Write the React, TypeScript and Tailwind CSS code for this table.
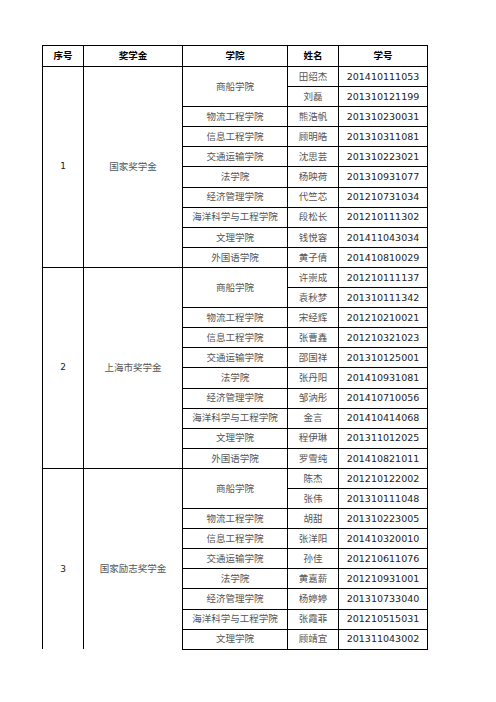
const groups = [
  {
    no: '1',
    award: '国家奖学金',
    open: false,
    rows: [
      { college: '商船学院', span: 2, name: '田绍杰', id: '201410111053' },
      { college: null, span: 0, name: '刘磊', id: '201310121199' },
      { college: '物流工程学院', span: 1, name: '熊浩帆', id: '201310230031' },
      { college: '信息工程学院', span: 1, name: '顾明皓', id: '201310311081' },
      { college: '交通运输学院', span: 1, name: '沈思芸', id: '201310223021' },
      { college: '法学院', span: 1, name: '杨映荷', id: '201310931077' },
      { college: '经济管理学院', span: 1, name: '代竺芯', id: '201210731034' },
      { college: '海洋科学与工程学院', span: 1, name: '段松长', id: '201210111302' },
      { college: '文理学院', span: 1, name: '钱悦容', id: '201411043034' },
      { college: '外国语学院', span: 1, name: '黄子倩', id: '201410810029' },
    ],
  },
  {
    no: '2',
    award: '上海市奖学金',
    open: false,
    rows: [
      { college: '商船学院', span: 2, name: '许崇成', id: '201210111137' },
      { college: null, span: 0, name: '袁秋梦', id: '201310111342' },
      { college: '物流工程学院', span: 1, name: '宋经辉', id: '201210210021' },
      { college: '信息工程学院', span: 1, name: '张曹鑫', id: '201210321023' },
      { college: '交通运输学院', span: 1, name: '邵国祥', id: '201310125001' },
      { college: '法学院', span: 1, name: '张丹阳', id: '201410931081' },
      { college: '经济管理学院', span: 1, name: '邹汭彤', id: '201410710056' },
      { college: '海洋科学与工程学院', span: 1, name: '金言', id: '201410414068' },
      { college: '文理学院', span: 1, name: '程伊琳', id: '201311012025' },
      { college: '外国语学院', span: 1, name: '罗雪纯', id: '201410821011' },
    ],
  },
  {
    no: '3',
    award: '国家励志奖学金',
    open: true,
    rows: [
      { college: '商船学院', span: 2, name: '陈杰', id: '201210122002' },
      { college: null, span: 0, name: '张伟', id: '201310111048' },
      { college: '物流工程学院', span: 1, name: '胡甜', id: '201310223005' },
      { college: '信息工程学院', span: 1, name: '张洋阳', id: '201410320010' },
      { college: '交通运输学院', span: 1, name: '孙佳', id: '201210611076' },
      { college: '法学院', span: 1, name: '黄嘉薪', id: '201210931001' },
      { college: '经济管理学院', span: 1, name: '杨婷婷', id: '201310733040' },
      { college: '海洋科学与工程学院', span: 1, name: '张霞菲', id: '201210515031' },
      { college: '文理学院', span: 1, name: '顾靖宜', id: '201311043002' },
    ],
  },
]

const cjk = "font-['Noto_Sans_CJK_SC',sans-serif]"
const num = "font-['DejaVu_Sans','Noto_Sans_CJK_SC',sans-serif]"

export default function App() {
  return (
    <div className="min-h-[702px] w-[496px] bg-white pl-[42px] pt-[45px]">
      <table className="w-[385px] table-fixed border-collapse text-center">
        <colgroup>
          <col className="w-[41px]" />
          <col className="w-[99px]" />
          <col className="w-[105px]" />
          <col className="w-[51px]" />
          <col className="w-[89px]" />
        </colgroup>
        <thead>
          <tr className={`h-[21px] text-[9.5px] font-bold leading-none text-black ${cjk}`}>
            <th className="border border-black p-0">序号</th>
            <th className="border border-black p-0">奖学金</th>
            <th className="border border-black p-0">学院</th>
            <th className="border border-black p-0">姓名</th>
            <th className="border border-black p-0">学号</th>
          </tr>
        </thead>
        <tbody>
          {groups.map((g) =>
            g.rows.map((r, i) => (
              <tr key={g.no + r.id} className="h-[20.1px] leading-none">
                {i === 0 && (
                  <>
                    <td
                      rowSpan={g.rows.length}
                      className={`border border-black p-0 align-middle text-[9px] text-[#222] ${num} ${g.open ? 'border-b-0 pt-[20px]' : ''}`}
                    >
                      {g.no}
                    </td>
                    <td
                      rowSpan={g.rows.length}
                      className={`border border-black p-0 align-middle text-[9.5px] text-[#555] ${cjk} ${g.open ? 'border-b-0 pt-[20px]' : ''}`}
                    >
                      {g.award}
                    </td>
                  </>
                )}
                {r.college && (
                  <td rowSpan={r.span} className={`border border-black p-0 text-[9.5px] text-[#555] ${cjk}`}>
                    {r.college}
                  </td>
                )}
                <td className={`border border-black p-0 text-[9.5px] text-[#555] ${cjk}`}>{r.name}</td>
                <td className={`border border-black p-0 text-[9.5px] text-[#222] ${num}`}>{r.id}</td>
              </tr>
            ))
          )}
        </tbody>
      </table>
    </div>
  )
}
